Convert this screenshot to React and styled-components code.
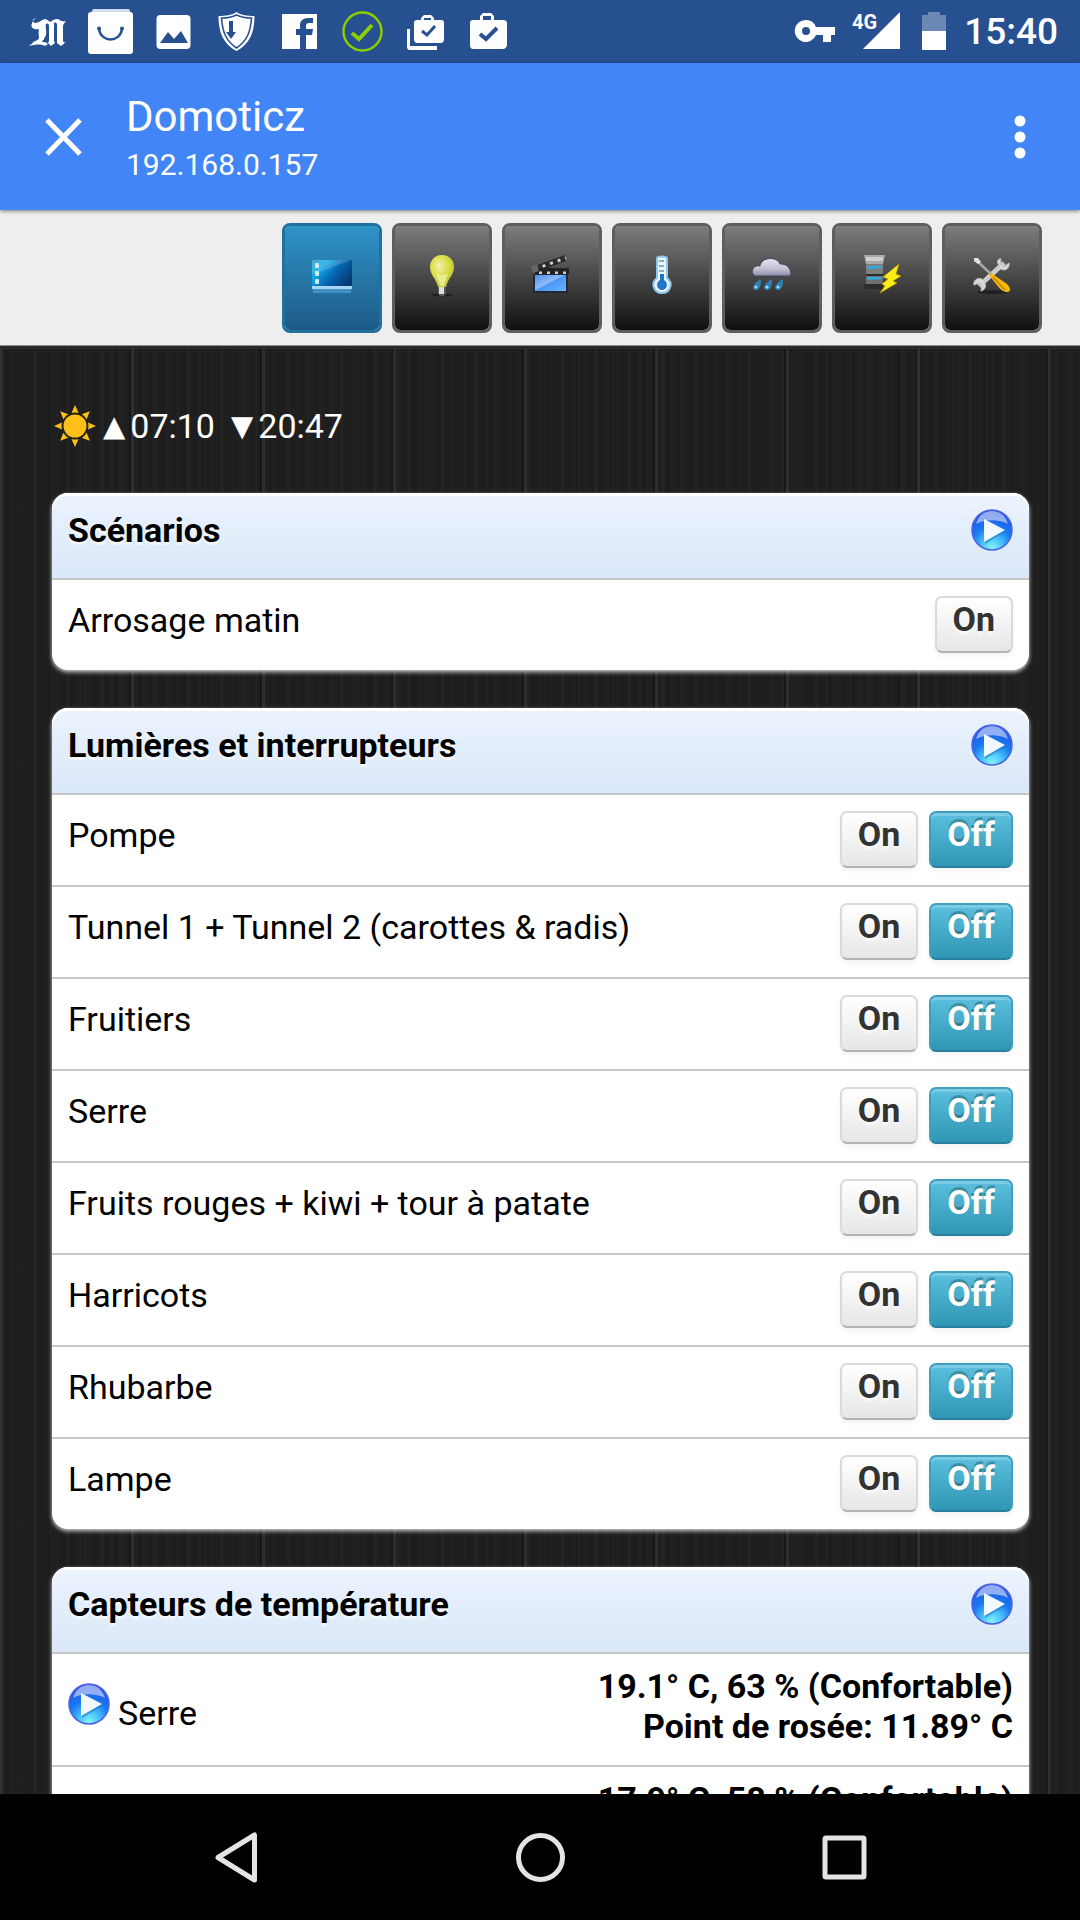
import React, { useId, useState } from 'react'
import styled, { createGlobalStyle, css } from 'styled-components'

const FONT = "Roboto, 'Liberation Sans', sans-serif"

const GlobalStyle = createGlobalStyle`
  * {
    box-sizing: border-box;
  }

  body {
    margin: 0;
    background: #000;
    font-family: ${FONT};
  }

  button {
    margin: 0;
    padding: 0;
    border: 0;
    background: none;
    color: inherit;
    font-family: inherit;
    cursor: pointer;
  }
`

const Screen = styled.div`
  display: flex;
  flex-direction: column;
  height: 100vh;
  overflow: hidden;
`

/* Status bar */

const StatusBar = styled.div`
  display: flex;
  flex: none;
  justify-content: space-between;
  height: 63px;
  padding: 0 22px 0 16px;
  background: #275091;
  color: #fff;
`

const StatusGroup = styled.div`
  display: flex;
  align-items: center;

  svg {
    display: block;
  }
`

const Network = styled.span`
  align-self: flex-start;
  margin: 12px -14px 0 16px;
  font-size: 20px;
  line-height: 20px;
  font-weight: 700;
`

const Clock = styled.time`
  margin-left: 18px;
  font-size: 37px;
  line-height: 65px;
  font-weight: 500;
`

/* Browser bar */

const AppBar = styled.header`
  position: relative;
  display: flex;
  flex: none;
  align-items: center;
  height: 147px;
  padding: 0 32px 0 36px;
  background: #4285f6;
  box-shadow: 0 1px 4px rgba(0, 0, 0, 0.5);
  color: #fff;
`

const BarButton = styled.button`
  display: flex;
  flex: none;

  svg {
    display: block;
  }
`

const Titles = styled.div`
  flex: 1;
  padding: 4px 0 0 34px;
`

const Title = styled.h1`
  margin: 0;
  font-size: 42px;
  line-height: 52px;
  font-weight: 400;
`

const Address = styled.div`
  font-size: 30px;
  line-height: 44px;
`

/* Domoticz navigation */

const Toolbar = styled.nav`
  display: flex;
  flex: none;
  justify-content: flex-end;
  gap: 10px;
  padding: 13px 38px 12px 10px;
  background: #eee;
  border-bottom: 1px solid #8a8f8d;
`

const ToolButton = styled.button`
  display: flex;
  justify-content: center;
  width: 100px;
  height: 110px;
  padding-top: 29px;
  border: 3px solid #5e5e5e;
  border-radius: 8px;
  background: linear-gradient(#7c7c7c, #101010) padding-box;

  ${props => props.$active && css`
    border-color: #21719f;
    background: linear-gradient(#2f93c8, #1d5a86) padding-box;
  `}
`

/* Dashboard */

const Dashboard = styled.main`
  flex: 1;
  min-height: 0;
  overflow: hidden;
  padding: 37px 51px 0 52px;
  border-top: 3px solid #262a29;
  background:
    repeating-linear-gradient(90deg, rgba(255, 255, 255, 0.07) 0 3px, transparent 3px 129px, rgba(0, 0, 0, 0.25) 129px 131px),
    repeating-linear-gradient(90deg, rgba(255, 255, 255, 0.02) 0 2px, transparent 2px 17px),
    repeating-linear-gradient(90deg, rgba(0, 0, 0, 0.08) 0 3px, transparent 3px 23px),
    repeating-linear-gradient(90deg, rgba(255, 255, 255, 0.012) 0 4px, transparent 4px 11px),
    #1e1e1e;
`

const SunTimes = styled.div`
  display: flex;
  align-items: center;
  height: 80px;
  margin-bottom: 27px;
  padding-left: 2px;
  color: #fff;
  font-size: 34px;
  line-height: 40px;

  svg {
    display: block;
    margin-right: 7px;
  }
`

const SunTime = styled.span`
  display: flex;
  align-items: center;
  margin-right: 16px;
`

const Arrow = styled.span`
  margin-right: 5px;
  font-family: 'DejaVu Sans', sans-serif;
  font-size: 29px;
`

const Card = styled.section`
  margin-bottom: 38px;
  border-radius: 16px;
  background: #fff;
  box-shadow: 0 2px 4px rgba(255, 255, 255, 0.8);
`

const CardHeader = styled.header`
  display: flex;
  justify-content: space-between;
  height: 85px;
  padding: 16px 16px 0;
  border-radius: 16px 16px 0 0;
  background: linear-gradient(#ebf3fd, #dbe8f9);
  box-shadow: inset 0 3px 0 #fff;
`

const CardTitle = styled.h2`
  margin: 0;
  font-size: 34px;
  line-height: 42px;
  font-weight: 700;
  text-shadow: 0 3px 0 rgba(255, 255, 255, 0.6);
`

const List = styled.ul`
  margin: 0;
  padding: 0;
  list-style: none;
  font-size: 34px;
  line-height: 40px;
`

const Row = styled.li`
  display: flex;
  justify-content: space-between;
  min-height: 92px;
  padding: 16px 16px 0;
  border-top: 2px solid #c6c6c6;
`

const DeviceName = styled.span`
  padding-top: 4px;
`

const Switches = styled.div`
  display: flex;
  gap: 11px;
`

const SwitchButton = styled.button`
  height: 57px;
  padding: 0 16px 11px;
  border: 2px solid #d9d9d9;
  border-bottom-color: #b3b3b3;
  border-radius: 7px;
  background: linear-gradient(#fff, #e6e6e6);
  box-shadow: 0 3px 5px rgba(0, 0, 0, 0.05);
  color: #333;
  font-size: 34px;
  line-height: 42px;
  font-weight: 700;
  text-shadow: 0 3px 3px rgba(255, 255, 255, 0.75);

  ${props => props.$primary && css`
    border-color: #3f9fbd;
    border-bottom-color: #28809a;
    background: linear-gradient(#5bc0de, #2f96b4);
    box-shadow: inset 0 3px 0 rgba(255, 255, 255, 0.2), 0 3px 5px rgba(0, 0, 0, 0.05);
    color: #fff;
    text-shadow: 0 -3px 0 rgba(0, 0, 0, 0.25);
  `}
`

const SensorRow = styled(Row)`
  min-height: 113px;
  padding-top: 12px;
`

const SensorName = styled.div`
  display: flex;
  gap: 8px;
  padding-top: 17px;
`

const SensorLabel = styled.span`
  padding-top: 10px;
`

const SensorValue = styled.div`
  margin-left: auto;
  text-align: right;
  font-weight: 700;
`

const PlayButton = styled.button`
  display: block;
  flex: none;
  align-self: flex-start;
  height: 42px;
`

/* System navigation */

const SystemNav = styled.nav`
  display: flex;
  flex: none;
  height: 126px;
  padding: 0 84px;
  background: #000;
`

const SystemButton = styled.button`
  display: flex;
  flex: 1;
  align-items: center;
  justify-content: center;
`

/* Icons */

const StatusIcon = ({ children }) => (
  <svg width="63" height="63" viewBox="0 0 63 63" fill="#fff" aria-hidden="true">{children}</svg>
)

const ToolIcon = ({ children }) => (
  <svg width="42" height="42" viewBox="0 0 42 42" aria-hidden="true">{children}</svg>
)

const NewspaperIcon = () => (
  <StatusIcon>
    <path d="M20 18c-4 1-4 4-1 5 4 0 6-3 10-4 3 1 4 2 5 3 3-2 5-3 7-3 2 0 3 2 5 2 2 1 3 0 4 0-1 2-3 3-3 5v14c0 2 1 3 3 2l-5 4-4-3V25c0-2-1-3-3-2v18l1 2-4 3-3-3 1-2V26c0-2-1-3-3-2-1 3 1 8 0 11-1 3-3 4-4 7 2 0 4 0 6 2l-3 2c-4-2-8-2-16 0 4-4 8-4 10-8 0-3-1-5 0-9-5 1-9-1-7-6 1-2 2-4 4-5z" />
    <path d="M27 24v16M17 43l9-4" stroke="#fff" strokeWidth="1.500" />
  </StatusIcon>
)

const ShopIcon = () => (
  <StatusIcon>
    <path d="M12 13l2-4h36l2 4z" opacity="0.8" />
    <rect x="9" y="12" width="45" height="42" rx="3" />
    <path d="M20 29c2 14 21 14 23 0" fill="none" stroke="#275091" strokeWidth="2.400" />
    <circle cx="20" cy="28.500" r="2" fill="#275091" />
    <circle cx="43" cy="28.500" r="2" fill="#275091" />
  </StatusIcon>
)

const PictureIcon = () => (
  <StatusIcon>
    <rect x="14.500" y="15" width="34" height="34" rx="4" />
    <path d="M18 43l8-11 6 7 7-8 7 12z" fill="#275091" />
  </StatusIcon>
)

const ShieldIcon = () => (
  <StatusIcon>
    <path d="M31.500 12c4 3 11 4 18 4 0 17-5 28-18 35-13-7-18-18-18-35 7 0 14-1 18-4z" />
    <path d="M31.500 15c4 2 9 3 15 3-1 15-5 23-15 30-10-7-14-15-15-30 6 0 11-1 15-3z" fill="none" stroke="#275091" strokeWidth="1.600" />
    <path d="M24 21h4v11h3l-5 7-5-7h3z" fill="#275091" />
  </StatusIcon>
)

const FacebookIcon = () => (
  <StatusIcon>
    <path d="M14 14h35v35H38V35h6l1-6h-7v-3c0-2 1-3 3-3h4v-5h-5c-5 0-8 3-8 7v4h-4v6h4v14H14z" />
  </StatusIcon>
)

const CheckIcon = () => (
  <StatusIcon>
    <g fill="none" stroke="#8dce00">
      <circle cx="31.500" cy="31.500" r="19" strokeWidth="2.400" />
      <path d="M21 33l7 6 13-14" strokeWidth="4" />
    </g>
  </StatusIcon>
)

const BagsCheckIcon = () => (
  <StatusIcon>
    <path d="M13 29h3v17h27v4H16c-2 0-3-1-3-3z" />
    <path fillRule="evenodd" d="M23 20h4v-2l3-3h7l3 3v2h7c2 0 3 1 3 3v16c0 2-1 4-3 4H23c-2 0-3-2-3-4V23c0-2 1-3 3-3zm7 0h7v-2h-7z" />
    <path d="M28 31l5 4 8-9" fill="none" stroke="#275091" strokeWidth="3" />
  </StatusIcon>
)

const BagCheckIcon = () => (
  <StatusIcon>
    <path fillRule="evenodd" d="M16 20h7v-4l3-3h8l3 3v4h9c2 0 4 1 4 3v22c0 2-2 4-4 4H16c-2 0-3-2-3-4V23c0-2 1-3 3-3zm10 0h8v-4h-8z" />
    <path d="M23 34l6 5 11-11" fill="none" stroke="#275091" strokeWidth="4" />
  </StatusIcon>
)

const KeyIcon = () => (
  <svg width="42" height="63" viewBox="0 0 42 63" fill="#fff" aria-hidden="true">
    <path fillRule="evenodd" d="M12 20a11 11 0 0 1 10 7h19v8h-4v7h-8v-7h-7a11 11 0 1 1-10-15zm0 7a4 4 0 1 0 0 8 4 4 0 0 0 0-8z" />
  </svg>
)

const SignalIcon = () => (
  <svg width="37" height="63" viewBox="0 0 37 63" fill="#fff" aria-hidden="true">
    <path d="M37 12v37H0z" />
  </svg>
)

const BatteryIcon = () => (
  <svg width="46" height="63" viewBox="0 0 46 63" fill="#fff" aria-hidden="true">
    <path d="M22 15h6v-3h12v3h6v17H22z" opacity="0.320" />
    <path d="M22 31h24v19H22z" />
  </svg>
)

const CloseIcon = () => (
  <svg width="56" height="56" viewBox="0 0 56 56" stroke="#fff" strokeWidth="5" aria-hidden="true">
    <path d="M11 11l33 34M44 11L11 45" />
  </svg>
)

const MoreIcon = () => (
  <svg width="56" height="56" viewBox="0 0 56 56" fill="#fff" aria-hidden="true">
    <circle cx="28" cy="12" r="5.500" />
    <circle cx="28" cy="28" r="5.500" />
    <circle cx="28" cy="44" r="5.500" />
  </svg>
)

const DashboardIcon = () => {
  const id = useId()
  return (
    <ToolIcon>
      <defs>
        <linearGradient id={id} x1="0" y1="0" x2="1" y2="0.600">
          <stop offset="0" stopColor="#1d93c4" />
          <stop offset="0.280" stopColor="#12a9ea" />
          <stop offset="0.600" stopColor="#0767b3" />
          <stop offset="1" stopColor="#063a77" />
        </linearGradient>
      </defs>
      <path d="M1 5h40v29H1z" fill={`url(#${id})`} />
      <path d="M1 5h39L14 15 1 19z" fill="#fff" opacity="0.180" />
      <path d="M1 31h40v3H1z" fill="#a9d5f4" />
      <path d="M2 34h38v4H2z" fill="#5fb0e8" opacity="0.500" />
      <g fill="#d5ecee">
        <rect x="4" y="8" width="4" height="5" rx="1" />
        <rect x="4" y="16" width="4" height="5" rx="1" />
        <rect x="4" y="24" width="4" height="5" rx="1" />
      </g>
    </ToolIcon>
  )
}

const BulbIcon = () => {
  const id = useId()
  return (
    <ToolIcon>
      <defs>
        <radialGradient id={id} cx="0.400" cy="0.350" r="0.650">
          <stop offset="0" stopColor="#f1f1b4" />
          <stop offset="0.500" stopColor="#dde04a" />
          <stop offset="1" stopColor="#bdc72a" />
        </radialGradient>
      </defs>
      <ellipse cx="21" cy="40" rx="11" ry="1.500" fill="#000" opacity="0.400" />
      <path d="M21 0c8 0 12 6 12 12 0 8-6 11-8 20h-8C15 23 9 20 9 12 9 6 13 0 21 0z" fill={`url(#${id})`} />
      <path d="M15 18l4 13h4l4-13c-4 3-8 3-12 0z" fill="#f3f2b4" opacity="0.700" />
      <path d="M17 32h8v7l-2 2h-4l-2-2z" fill="#55585b" />
      <path d="M18 32h5v7h-5z" fill="#dcdde2" />
    </ToolIcon>
  )
}

const SceneIcon = () => {
  const id = useId()
  return (
    <ToolIcon>
      <defs>
        <linearGradient id={id} x1="0" y1="0" x2="1" y2="1">
          <stop offset="0" stopColor="#4b8eed" />
          <stop offset="0.450" stopColor="#8ebcfc" />
          <stop offset="0.500" stopColor="#4a97f5" />
          <stop offset="1" stopColor="#69b7ff" />
        </linearGradient>
      </defs>
      <path d="M1 12L34 0l1 6L3 18z" fill="#292b2c" />
      <path d="M4 13h34v6H4z" fill="#222" />
      <path d="M4 14l31-11M8 18h30" stroke="#d0d0d0" strokeWidth="3" strokeDasharray="3 5" />
      <path d="M0 11l6-2 2 7-6 2z" fill="#666" />
      <path d="M2 19h35v19H2z" fill="#222a36" />
      <path d="M4 20h31v16H4z" fill={`url(#${id})`} />
    </ToolIcon>
  )
}

const ThermometerIcon = () => (
  <ToolIcon>
    <path d="M16 3c0-2 10-2 10 0v20c7 5 3 15-5 15s-12-10-5-15z" fill="#e8f5ff" stroke="#8fc6ec" strokeWidth="2" />
    <path d="M19 19h4v6c5 3 3 10-2 10s-7-7-2-10z" fill="#1f76c6" />
    <path d="M18 6h5M18 11h5M18 16h5" stroke="#6898b8" strokeWidth="1.500" />
  </ToolIcon>
)

const RainIcon = () => {
  const id = useId()
  return (
    <ToolIcon>
      <defs>
        <linearGradient id={id} x1="0" y1="0" x2="0" y2="1">
          <stop offset="0" stopColor="#e6e6f0" />
          <stop offset="0.600" stopColor="#c0c0d2" />
          <stop offset="1" stopColor="#8b8ba8" />
        </linearGradient>
      </defs>
      <path d="M4 21c-6-4-1-12 5-10C10 2 26 1 29 9c8-1 13 8 10 12z" fill={`url(#${id})`} stroke="#45455e" />
      <path d="M10 24c0 4 0 11-5 11-6-1-2-7 5-11zm11 0c0 4 0 11-5 11-6-1-2-7 5-11zm11 0c0 4 0 11-5 11-6-1-2-7 5-11z" fill="#2f80b8" />
      <g fill="#9edcfa">
        <circle cx="5" cy="32" r="1.500" />
        <circle cx="16" cy="32" r="1.500" />
        <circle cx="27" cy="32" r="1.500" />
      </g>
    </ToolIcon>
  )
}

const MetersIcon = () => (
  <ToolIcon>
    <path d="M3 0h21l-2 9H5z" fill="#a9a9a9" />
    <path d="M5 2h17v4H5z" fill="#cfcfcf" />
    <path d="M5 9h17v10H5z" fill="#7d7d7d" />
    <path d="M5 19h17v10H5z" fill="#707070" />
    <path d="M5 19h17v2H5z" fill="#2c2c2c" />
    <path d="M6 11h15v2l-15 1z" fill="#2fa9df" />
    <path d="M6 22h15v2l-15 1z" fill="#2fa9df" />
    <path d="M3 29h19v5H3z" fill="#222" opacity="0.600" />
    <path d="M38 9L22 22l5 2-6 5 3 2-5 7 17-10-4-2 8-5-5-2z" fill="#ffee14" stroke="#b59c08" strokeWidth="0.700" />
  </ToolIcon>
)

const ToolsIcon = () => (
  <ToolIcon>
    <ellipse cx="21" cy="37" rx="15" ry="2" fill="#000" opacity="0.400" />
    <path d="M8 31L33 8" stroke="#cdcdcd" strokeWidth="5" />
    <path d="M29 11c-5-4-1-8 1-7l-1 5 4 3 5-4c1 4-3 9-8 6M11 24c-5-2-9 2-8 6l5-2 3 2-1 6c4-1 6-5 3-9" fill="#d9d9d9" stroke="#c4c4c4" />
    <path d="M5 5l16 15" stroke="#aaa" strokeWidth="2.500" />
    <path d="M3 3l4 0 3 4-3 2-4-3z" fill="#e2e2e2" />
    <path d="M20 18l16 11c4 4 4 8 0 8-5 0-7-3-18-17z" fill="#f6b90b" />
    <path d="M22 22l12 13" stroke="#cf7f02" strokeWidth="1.500" />
  </ToolIcon>
)

const SunIcon = () => (
  <svg width="42" height="42" viewBox="0 0 42 42" fill="#fdbf18" aria-hidden="true">
    <circle cx="21" cy="21" r="11.500" />
    {[0, 45, 90, 135, 180, 225, 270, 315].map(angle => (
      <path key={angle} d="M21 0l3.500 8q-3.500-1-7 0z" transform={`rotate(${angle} 21 21)`} />
    ))}
  </svg>
)

const PlayIcon = () => {
  const id = useId()
  return (
    <svg width="42" height="42" viewBox="0 0 42 42" display="block" aria-hidden="true">
      <defs>
        <radialGradient id={id} cx="0.500" cy="0.950" r="0.900">
          <stop offset="0" stopColor="#86f3ff" />
          <stop offset="0.280" stopColor="#4cc6fb" />
          <stop offset="0.600" stopColor="#1878f2" />
          <stop offset="1" stopColor="#2a52e4" />
        </radialGradient>
      </defs>
      <circle cx="21" cy="21" r="20" fill={`url(#${id})`} stroke="#4a63e6" strokeWidth="1.500" />
      <path d="M5 15C8 5 15 2 21 2s13 3 16 13c-9-5-23-5-32 0z" fill="#fff" opacity="0.500" />
      <path d="M14 12l20 11-20 12z" fill="#1670b8" opacity="0.500" />
      <path d="M13 10l21 11-21 12z" fill="#eff9ff" />
    </svg>
  )
}

/* Content */

const TOOLS = [
  { label: 'Tableau de bord', Icon: DashboardIcon },
  { label: 'Interrupteurs', Icon: BulbIcon },
  { label: 'Scénarios', Icon: SceneIcon },
  { label: 'Température', Icon: ThermometerIcon },
  { label: 'Météo', Icon: RainIcon },
  { label: 'Mesures', Icon: MetersIcon },
  { label: 'Réglages', Icon: ToolsIcon },
]

const LIGHTS = [
  'Pompe',
  'Tunnel 1 + Tunnel 2 (carottes & radis)',
  'Fruitiers',
  'Serre',
  'Fruits rouges + kiwi + tour à patate',
  'Harricots',
  'Rhubarbe',
  'Lampe',
]

const Section = ({ title, children }) => (
  <Card>
    <CardHeader>
      <CardTitle>{title}</CardTitle>
      <PlayButton aria-label={`Ouvrir ${title}`}><PlayIcon /></PlayButton>
    </CardHeader>
    <List>{children}</List>
  </Card>
)

const Light = ({ name }) => {
  const [on, setOn] = useState(false)
  return (
    <Row>
      <DeviceName>{name}</DeviceName>
      <Switches>
        <SwitchButton $primary={on} aria-pressed={on} onClick={() => setOn(true)}>On</SwitchButton>
        <SwitchButton $primary={!on} aria-pressed={!on} onClick={() => setOn(false)}>Off</SwitchButton>
      </Switches>
    </Row>
  )
}

const App = () => {
  const [active, setActive] = useState(0)

  return (
    <Screen>
      <GlobalStyle />

      <StatusBar>
        <StatusGroup>
          <NewspaperIcon />
          <ShopIcon />
          <PictureIcon />
          <ShieldIcon />
          <FacebookIcon />
          <CheckIcon />
          <BagsCheckIcon />
          <BagCheckIcon />
        </StatusGroup>
        <StatusGroup>
          <KeyIcon />
          <Network>4G</Network>
          <SignalIcon />
          <BatteryIcon />
          <Clock>15:40</Clock>
        </StatusGroup>
      </StatusBar>

      <AppBar>
        <BarButton aria-label="Fermer"><CloseIcon /></BarButton>
        <Titles>
          <Title>Domoticz</Title>
          <Address>192.168.0.157</Address>
        </Titles>
        <BarButton aria-label="Menu"><MoreIcon /></BarButton>
      </AppBar>

      <Toolbar>
        {TOOLS.map(({ label, Icon }, index) => (
          <ToolButton key={label} aria-label={label} $active={index === active} onClick={() => setActive(index)}>
            <Icon />
          </ToolButton>
        ))}
      </Toolbar>

      <Dashboard>
        <SunTimes>
          <SunIcon />
          <SunTime><Arrow>▲</Arrow>07:10</SunTime>
          <SunTime><Arrow>▼</Arrow>20:47</SunTime>
        </SunTimes>

        <Section title="Scénarios">
          <Row>
            <DeviceName>Arrosage matin</DeviceName>
            <Switches>
              <SwitchButton>On</SwitchButton>
            </Switches>
          </Row>
        </Section>

        <Section title="Lumières et interrupteurs">
          {LIGHTS.map(name => <Light key={name} name={name} />)}
        </Section>

        <Section title="Capteurs de température">
          <SensorRow>
            <SensorName>
              <PlayButton aria-label="Historique"><PlayIcon /></PlayButton>
              <SensorLabel>Serre</SensorLabel>
            </SensorName>
            <SensorValue>
              <div>19.1° C, 63 % (Confortable)</div>
              <div>Point de rosée: 11.89° C</div>
            </SensorValue>
          </SensorRow>
          <SensorRow>
            <SensorValue>17.9° C, 58 % (Confortable)</SensorValue>
          </SensorRow>
        </Section>
      </Dashboard>

      <SystemNav>
        <SystemButton aria-label="Retour">
          <svg width="63" height="63" viewBox="0 0 63 63" fill="none" stroke="#e4e4e4" strokeWidth="5" strokeLinejoin="round">
            <path d="M49.500 9v45L13 31.500z" />
          </svg>
        </SystemButton>
        <SystemButton aria-label="Accueil">
          <svg width="63" height="63" viewBox="0 0 63 63" fill="none" stroke="#e4e4e4" strokeWidth="5">
            <circle cx="31.500" cy="31.500" r="22" />
          </svg>
        </SystemButton>
        <SystemButton aria-label="Applications récentes">
          <svg width="63" height="63" viewBox="0 0 63 63" fill="none" stroke="#e4e4e4" strokeWidth="5" strokeLinejoin="round">
            <rect x="12" y="12" width="39" height="39" rx="1" />
          </svg>
        </SystemButton>
      </SystemNav>
    </Screen>
  )
}

export default App
